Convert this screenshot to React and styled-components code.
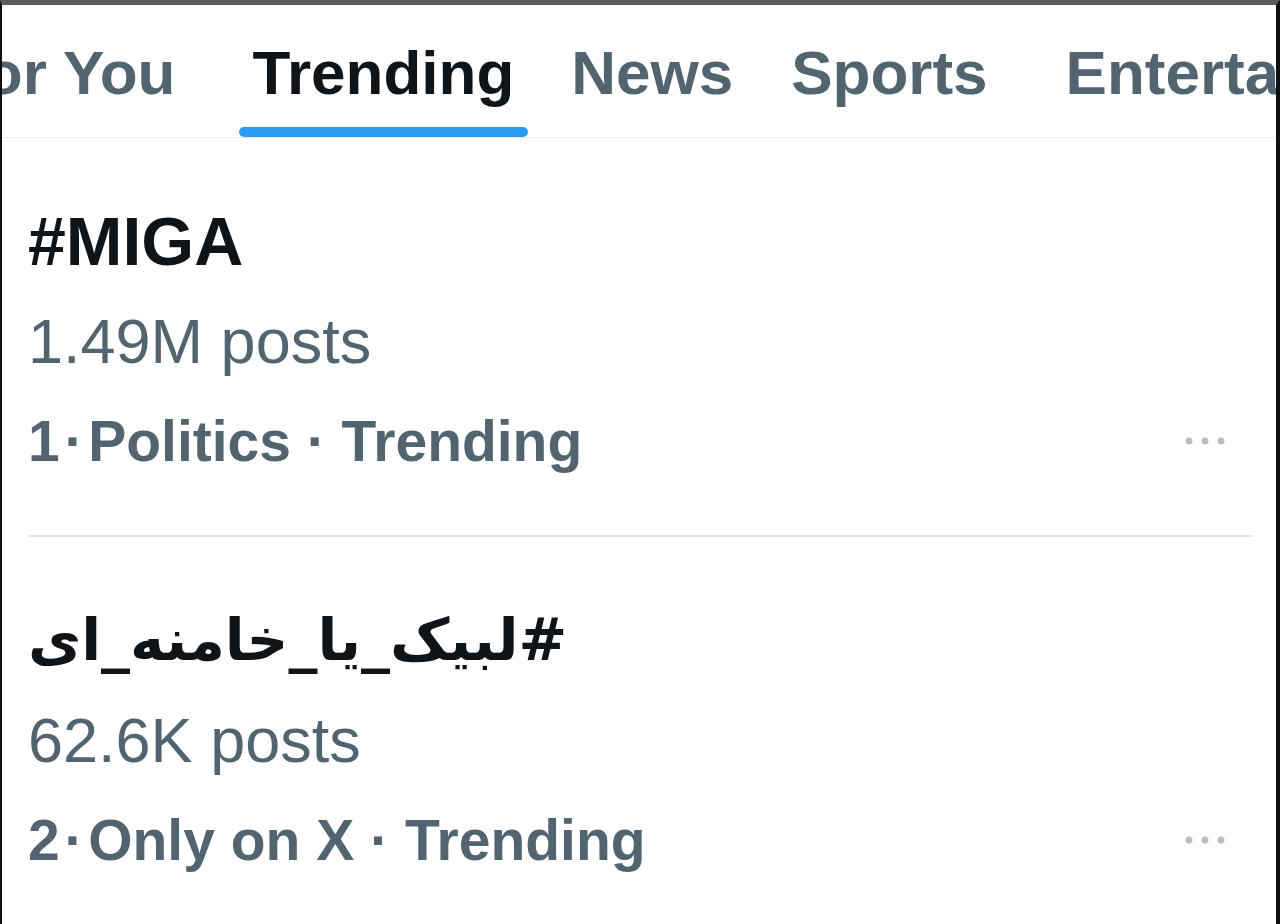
import styled, { createGlobalStyle } from "styled-components";

const GlobalStyle = createGlobalStyle`
  html, body {
    margin: 0;
    padding: 0;
    background: #ffffff;
  }
  * {
    box-sizing: border-box;
  }
`;

// gap = space before each tab; the first one is the strip's scroll offset
const tabs = [
  { label: "For You", gap: -55 },
  { label: "Trending", gap: 77, active: true },
  { label: "News", gap: 57 },
  { label: "Sports", gap: 58 },
  { label: "Entertainment", gap: 78 },
];

const trends = [
  { name: "#MIGA", posts: "1.49M posts", rank: "1", category: "Politics" },
  { name: "#لبیک_یا_خامنه_ای", rtl: true, posts: "62.6K posts", rank: "2", category: "Only on X" },
];

const MoreIcon = () => (
  <svg width="40" height="10" viewBox="0 0 40 10" aria-hidden="true">
    <circle cx="4" cy="5" r="3.5" fill="#b9bec3" />
    <circle cx="20" cy="5" r="3.5" fill="#b9bec3" />
    <circle cx="36" cy="5" r="3.5" fill="#b9bec3" />
  </svg>
);

const App = () => {
  return (
    <>
      <GlobalStyle />
      <Frame>
        <TabBar>
          {tabs.map((tab) => (
            <Tab key={tab.label} $gap={tab.gap} $active={tab.active}>
              {tab.label}
              {tab.active && <Indicator />}
            </Tab>
          ))}
        </TabBar>

        {trends.map((trend, i) => (
          <div key={trend.rank}>
            {i > 0 && <Divider />}
            <Trend>
              <TrendName dir={trend.rtl ? "rtl" : "ltr"} $rtl={trend.rtl}>
                {trend.name}
              </TrendName>
              <PostCount>{trend.posts}</PostCount>
              <MetaRow>
                <Meta>
                  {trend.rank}{"\u200A·\u200A"}{trend.category} · Trending
                </Meta>
                <MoreButton type="button" aria-label="More">
                  <MoreIcon />
                </MoreButton>
              </MetaRow>
            </Trend>
          </div>
        ))}
      </Frame>
    </>
  );
};

export default App;

const Frame = styled.div`
  width: 1280px;
  height: 924px;
  overflow: hidden;
  background: #ffffff;
  border-top: 5px solid #5c5c5c;
  border-left: 2px solid #111111;
  border-right: 4px solid #111111;
  font-family: "Liberation Sans", Arial, sans-serif;
`;

const TabBar = styled.div`
  display: flex;
  height: 133px;
  border-bottom: 1px solid #e9ecee;
  white-space: nowrap;
`;

const Tab = styled.div`
  position: relative;
  flex-shrink: 0;
  margin-left: ${(p) => p.$gap}px;
  padding-top: 31px;
  font-size: 62px;
  line-height: 74px;
  font-weight: 700;
  color: ${(p) => (p.$active ? "#0f1419" : "#536471")};
`;

const Indicator = styled.span`
  position: absolute;
  left: -13px;
  right: -14px;
  bottom: 0;
  height: 10px;
  border-radius: 5px;
  background: #2b9af0;
`;

const Trend = styled.div`
  display: flex;
  flex-direction: column;
  padding: 53px 0 44px 26px;
`;

const TrendName = styled.div`
  font-size: ${(p) => (p.$rtl ? "58px" : "68px")};
  line-height: 100px;
  font-weight: 700;
  color: #0f1419;
  text-align: left;
  font-family: ${(p) =>
    p.$rtl ? `"DejaVu Sans", "Noto Sans", sans-serif` : `"Liberation Sans", Arial, sans-serif`};
`;

const PostCount = styled.div`
  font-size: 63px;
  line-height: 100px;
  color: #536471;
`;

const MetaRow = styled.div`
  display: flex;
  align-items: center;
  justify-content: space-between;
  height: 100px;
`;

const Meta = styled.span`
  font-size: 57px;
  font-weight: 700;
  color: #536471;
`;

const MoreButton = styled.button`
  display: flex;
  align-items: center;
  margin-right: 51px;
  padding: 0;
  border: none;
  background: none;
  cursor: pointer;
`;

const Divider = styled.div`
  height: 2px;
  margin: 0 23px 0 26px;
  background: #e6e8ea;
`;
